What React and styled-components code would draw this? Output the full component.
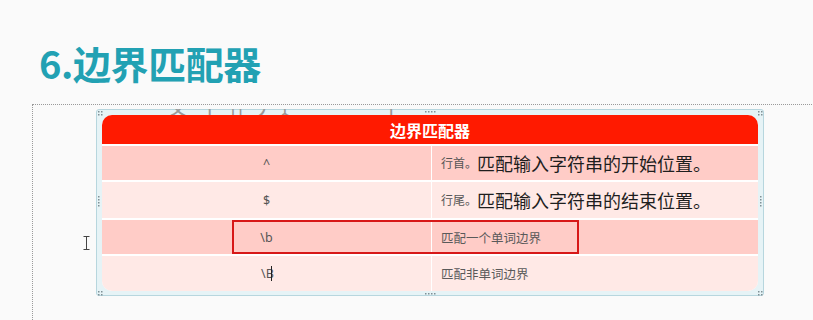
import React from "react";
import styled, { createGlobalStyle } from "styled-components";

const Global = createGlobalStyle`
  html, body { margin: 0; padding: 0; background: #fafafa; }
  body { font-family: "Noto Sans CJK SC", "Noto Sans", sans-serif; overflow: hidden; }
`;

const Page = styled.div`
  width: 813px;
  height: 320px;
  overflow: hidden;
  position: relative;
`;

const Title = styled.h1`
  margin: 0;
  padding: 39px 0 0 39px;
  height: 65px;
  box-sizing: content-box;
  font-family: "Noto Sans CJK SC", sans-serif;
  font-weight: 700;
  font-size: 38px;
  line-height: 48px;
  color: #22a1b3;
  letter-spacing: -0.4px;
`;

const Canvas = styled.div`
  margin-left: 32px;
  width: 800px;
  height: 230px;
  border-top: 1px dotted #9a9a9a;
  border-left: 1px dotted #9a9a9a;
  padding: 4px 0 0 63px;
  box-sizing: border-box;
`;

const Frame = styled.div`
  position: relative;
  width: 668px;
  height: 187px;
  box-sizing: border-box;
  border: 1px solid #b7d6de;
  border-radius: 3px;
  background: #e6f3f6;
  padding: 5px;
`;

const Ghost = styled.div`
  position: absolute;
  left: 70px;
  top: -1px;
  height: 7px;
  overflow: hidden;
  font-size: 22px;
  line-height: 24px;
  color: #9a9a9a;
  white-space: pre;
`;

const GhostText = styled.span`
  display: block;
  margin-top: -16px;
`;

const Handles = styled.svg`
  position: absolute;
  left: 0;
  top: 0;
  pointer-events: none;
`;

const Table = styled.div`
  position: relative;
  width: 656px;
  display: flex;
  flex-direction: column;
  gap: 2px;
  background: #ffffff;
  border-radius: 10px;
  overflow: hidden;
`;

const Header = styled.div`
  height: 29px;
  background: #ff1a00;
  color: #ffffff;
  font-weight: 700;
  font-size: 16px;
  display: flex;
  align-items: center;
  justify-content: center;
`;

const Row = styled.div`
  display: grid;
  grid-template-columns: 329px 1fr;
  column-gap: 1px;
  height: ${(p) => p.$h}px;
`;

const Cell = styled.div`
  background: ${(p) => (p.$dark ? "#ffccc7" : "#ffe9e6")};
  display: flex;
  align-items: center;
  justify-content: ${(p) => (p.$center ? "center" : "flex-start")};
  padding-left: ${(p) => (p.$center ? "0" : "9px")};
  color: #555;
  font-size: 12.5px;
  font-family: "Noto Sans", "Noto Sans CJK SC", sans-serif;
  white-space: nowrap;
`;

const Small = styled.span`
  font-size: 12px;
  color: #555;
`;

const Big = styled.span`
  font-size: 18px;
  color: #1e1e1e;
`;

const Desc = styled.span`
  font-size: 12.5px;
  color: #5a5a5a;
`;

const Caret = styled.span`
  display: inline-block;
  width: 1px;
  height: 15px;
  background: #222;
  margin-left: -3px;
`;

const Highlight = styled.div`
  position: absolute;
  left: 130px;
  top: 105px;
  width: 347px;
  height: 34px;
  box-sizing: border-box;
  border: 2px solid #d71818;
`;

const IBeam = styled.svg`
  position: absolute;
  left: 83px;
  top: 236px;
`;

const rows = [
  { sym: "^", dark: true, h: 34, small: "行首。", big: "匹配输入字符串的开始位置。" },
  { sym: "$", dark: false, h: 36, small: "行尾。", big: "匹配输入字符串的结束位置。" },
  { sym: "\\b", dark: true, h: 34, desc: "匹配一个单词边界" },
  { sym: "\\B", dark: false, h: 35, desc: "匹配非单词边界", caret: true },
];

const dots = (x, y, cols, rowsN) => {
  const out = [];
  for (let i = 0; i < cols; i++)
    for (let j = 0; j < rowsN; j++)
      out.push(<rect key={`${x}-${y}-${i}-${j}`} x={x + i * 3} y={y + j * 3} width="1.5" height="1.5" fill="#7f9095" />);
  return out;
};

export default function App() {
  return (
    <Page>
      <Global />
      <Title>6.边界匹配器</Title>
      <Canvas>
        <Frame>
          <Ghost>
            <GhostText>{"文  丨 卄 丿 辶    亠 亠  丨"}</GhostText>
          </Ghost>
          <Handles width="668" height="187" viewBox="0 0 668 187">
            {dots(1, 1, 2, 2)}
            {dots(328, 1, 4, 1)}
            {dots(661, 1, 2, 2)}
            {dots(1, 86, 1, 4)}
            {dots(663, 86, 1, 4)}
            {dots(1, 181, 2, 2)}
            {dots(328, 183, 4, 1)}
            {dots(661, 181, 2, 2)}
          </Handles>
          <Table>
            <Header>边界匹配器</Header>
            {rows.map((r) => (
              <Row key={r.sym} $h={r.h}>
                <Cell $dark={r.dark} $center>
                  {r.sym}
                  {r.caret && <Caret />}
                </Cell>
                <Cell $dark={r.dark}>
                  {r.desc ? (
                    <Desc>{r.desc}</Desc>
                  ) : (
                    <>
                      <Small>{r.small}</Small>
                      <Big>{r.big}</Big>
                    </>
                  )}
                </Cell>
              </Row>
            ))}
            <Highlight />
          </Table>
        </Frame>
      </Canvas>
      <IBeam width="7" height="14" viewBox="0 0 7 14">
        <path d="M0.5 0.5h6M3.5 0.5v13M0.5 13.5h6" stroke="#444" strokeWidth="1" fill="none" />
      </IBeam>
    </Page>
  );
}
